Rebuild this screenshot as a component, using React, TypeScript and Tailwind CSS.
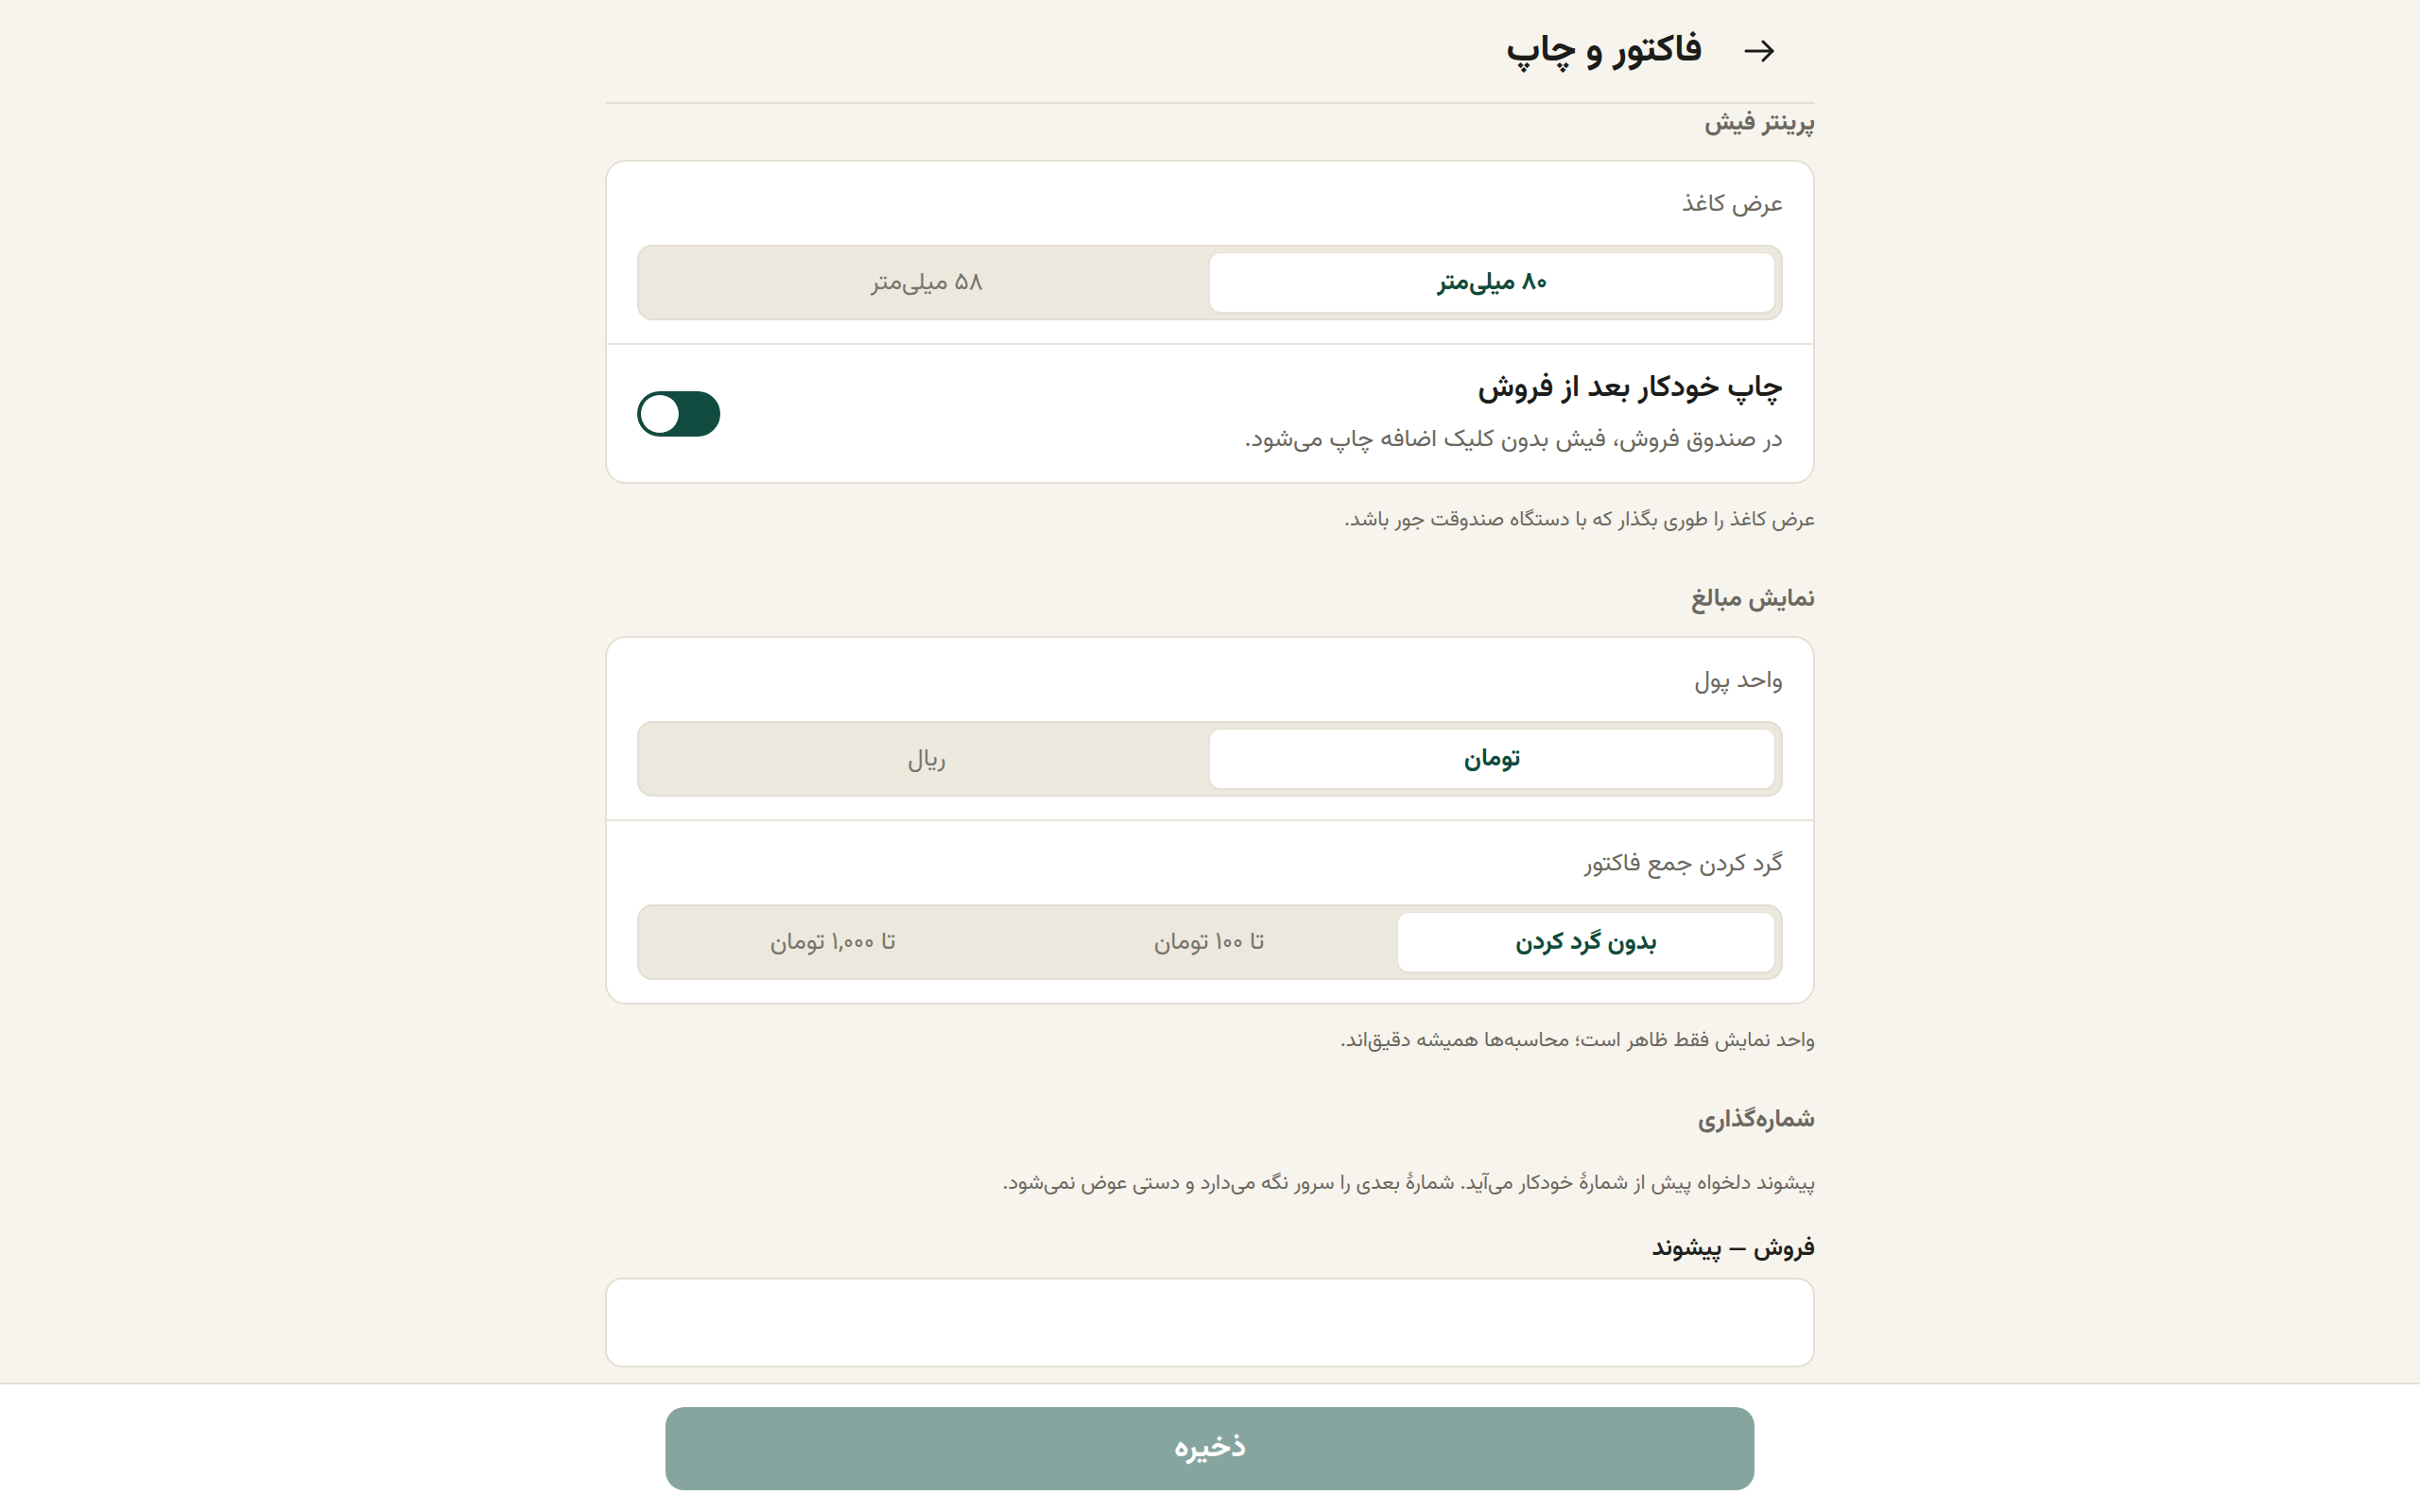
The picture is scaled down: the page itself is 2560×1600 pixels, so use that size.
import React from "react";

const font = "font-['Vazirmatn','Noto_Sans_Arabic','DejaVu_Sans',sans-serif]";

function BackArrow() {
  return (
    <svg width="32" height="24" viewBox="0 0 32 24" fill="none" stroke="#1c1c1a" strokeWidth="3" strokeLinecap="round" strokeLinejoin="round">
      <path d="M2 12h28" />
      <path d="M20 2l10 10-10 10" />
    </svg>
  );
}

function Segmented({ options, active }: { options: string[]; active: number }) {
  return (
    <div className="flex h-[80px] rounded-[16px] border-2 border-[#e3ded2] bg-[#ece8dd] p-[6px]">
      {options.map((o, i) => (
        <div
          key={o}
          className={
            i === active
              ? "flex flex-1 items-center justify-center rounded-[12px] border border-[#e6e1d6] bg-white text-[26px] font-bold text-[#0f4a3b] shadow-[0_1px_2px_rgba(0,0,0,0.06)]"
              : "flex flex-1 items-center justify-center text-[26px] text-[#77746a]"
          }
        >
          {o}
        </div>
      ))}
    </div>
  );
}

function SectionTitle({ children }: { children: React.ReactNode }) {
  return <h2 className="text-[26px] font-bold leading-[36px] text-[#6b6961]">{children}</h2>;
}

function Hint({ children }: { children: React.ReactNode }) {
  return <p className="text-[22px] leading-[36px] text-[#6b685f]">{children}</p>;
}

function SelectRow({ label, options, active }: { label: string; options: string[]; active: number }) {
  return (
    <div className="flex flex-col gap-6 px-8 pt-[28px] pb-6">
      <div className="text-[26px] leading-[36px] text-[#6b685f]">{label}</div>
      <Segmented options={options} active={active} />
    </div>
  );
}

export default function App() {
  return (
    <div dir="rtl" className={`flex h-screen flex-col bg-[#f7f4ed] ${font}`}>
      <main className="flex-1 overflow-hidden">
        <div className="mx-auto w-[1280px]">
          <header className="flex h-[110px] items-center gap-[44px] border-b-2 border-[#e3dfd4] pr-[43px]">
            <BackArrow />
            <h1 className="text-[40px] font-bold text-[#1c1c1a]">فاکتور و چاپ</h1>
          </header>

          <section className="mt-[3px] flex flex-col">
            <SectionTitle>پرینتر فیش</SectionTitle>
            <div className="mt-5 overflow-hidden rounded-[22px] border-2 border-[#e5e0d4] bg-white">
              <SelectRow label="عرض کاغذ" options={["۸۰ میلی‌متر", "۵۸ میلی‌متر"]} active={0} />
              <div className="flex items-center justify-between border-t-2 border-[#e8e4da] px-8 py-[26px]">
                <div className="flex flex-col">
                  <div className="text-[32px] font-semibold leading-[40px] text-[#1c1c1a]">چاپ خودکار بعد از فروش</div>
                  <div className="mt-[17px] text-[26px] leading-[36px] text-[#6b685f]">در صندوق فروش، فیش بدون کلیک اضافه چاپ می‌شود.</div>
                </div>
                <div className="flex h-[48px] w-[88px] items-center justify-end rounded-full bg-[#124c40] p-[3px]">
                  <div className="h-[42px] w-[42px] rounded-full border border-[#0c3b31] bg-white" />
                </div>
              </div>
            </div>
            <div className="mt-[21px]">
              <Hint>عرض کاغذ را طوری بگذار که با دستگاه صندوقت جور باشد.</Hint>
            </div>
          </section>

          <section className="mt-[48px] flex flex-col">
            <SectionTitle>نمایش مبالغ</SectionTitle>
            <div className="mt-5 overflow-hidden rounded-[22px] border-2 border-[#e5e0d4] bg-white">
              <SelectRow label="واحد پول" options={["تومان", "ریال"]} active={0} />
              <div className="border-t-2 border-[#e8e4da]">
                <SelectRow label="گرد کردن جمع فاکتور" options={["بدون گرد کردن", "تا ۱۰۰ تومان", "تا ۱,۰۰۰ تومان"]} active={0} />
              </div>
            </div>
            <div className="mt-[21px]">
              <Hint>واحد نمایش فقط ظاهر است؛ محاسبه‌ها همیشه دقیق‌اند.</Hint>
            </div>
          </section>

          <section className="mt-[48px] flex flex-col">
            <SectionTitle>شماره‌گذاری</SectionTitle>
            <div className="mt-[31px]">
              <Hint>پیشوند دلخواه پیش از شمارهٔ خودکار می‌آید. شمارهٔ بعدی را سرور نگه می‌دارد و دستی عوض نمی‌شود.</Hint>
            </div>
            <label className="mt-[33px] text-[26px] font-semibold leading-[36px] text-[#1f1f1d]">فروش — پیشوند</label>
            <input className="mt-3 h-[95px] rounded-[18px] border-2 border-[#e3dfd3] bg-white px-6 text-[26px] outline-none" />
            <div className="mt-[14px]">
              <Hint>نمونهٔ شماره در فاکتور چاپ می‌شود.</Hint>
            </div>
          </section>
        </div>
      </main>

      <footer className="border-t-2 border-[#e5e0d4] bg-white pt-6 pb-[23px]">
        <button className="mx-auto flex h-[88px] w-[1152px] items-center justify-center rounded-[20px] bg-[#87a59f] text-[32px] font-bold text-white">
          ذخیره
        </button>
      </footer>
    </div>
  );
}
